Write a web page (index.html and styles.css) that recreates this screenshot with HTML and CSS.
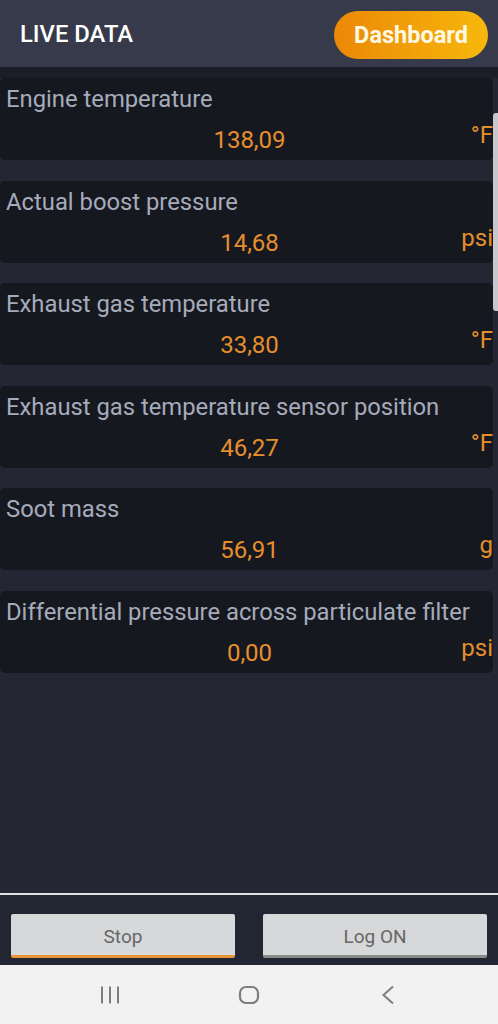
FILE: index.html
```html
<!DOCTYPE html>
<html>
<head>
<meta charset="utf-8">
<link rel="stylesheet" href="styles.css">
</head>
<body>
<div class="app">
  <header class="topbar">
    <h1 class="title">LIVE DATA</h1>
    <button class="dash-btn">Dashboard</button>
  </header>
  <div class="shadow"></div>
  <main class="list">
    <div class="card">
      <div class="label">Engine temperature</div>
      <div class="row"><span class="value">138,09</span><span class="unit">°F</span></div>
    </div>
    <div class="card">
      <div class="label">Actual boost pressure</div>
      <div class="row"><span class="value">14,68</span><span class="unit">psi</span></div>
    </div>
    <div class="card">
      <div class="label">Exhaust gas temperature</div>
      <div class="row"><span class="value">33,80</span><span class="unit">°F</span></div>
    </div>
    <div class="card">
      <div class="label">Exhaust gas temperature sensor position</div>
      <div class="row"><span class="value">46,27</span><span class="unit">°F</span></div>
    </div>
    <div class="card">
      <div class="label">Soot mass</div>
      <div class="row"><span class="value">56,91</span><span class="unit">g</span></div>
    </div>
    <div class="card">
      <div class="label">Differential pressure across particulate filter</div>
      <div class="row"><span class="value">0,00</span><span class="unit">psi</span></div>
    </div>
    <div class="scrollbar"></div>
  </main>
  <footer class="actions">
    <button class="act act-stop">Stop</button>
    <button class="act act-log">Log ON</button>
  </footer>
  <nav class="navbar">
    <svg class="nav-icon" width="20" height="20" viewBox="0 0 20 20"><path d="M2 1.5v17M10 1.5v17M18 1.5v17" stroke="#7e7e7e" stroke-width="2" fill="none"/></svg>
    <svg class="nav-icon" width="22" height="20" viewBox="0 0 22 20"><rect x="2" y="2" width="18" height="16" rx="6" stroke="#7e7e7e" stroke-width="2.2" fill="none"/></svg>
    <svg class="nav-icon" width="20" height="20" viewBox="0 0 20 20"><path d="M15 1.5L5.5 10l9.5 8.5" stroke="#7e7e7e" stroke-width="2" fill="none"/></svg>
  </nav>
</div>
</body>
</html>
```

FILE: styles.css
```css
* { box-sizing: border-box; }
html, body { margin: 0; padding: 0; }
body {
  width: 498px;
  height: 1024px;
  overflow: hidden;
  font-family: Roboto, "Liberation Sans", sans-serif;
  background: #242733;
}
.app {
  display: flex;
  flex-direction: column;
  height: 1024px;
}
.topbar {
  height: 67px;
  background: #363a4b;
  display: flex;
  align-items: center;
  justify-content: space-between;
  padding: 0 10px 0 20px;
}
.title {
  margin: 0;
  color: #ffffff;
  font-size: 23.8px;
  font-weight: 500;
}
.dash-btn {
  border: none;
  height: 48px;
  width: 154px;
  padding: 0;
  border-radius: 24px;
  background: linear-gradient(90deg, #ec8806 0%, #f6b80c 100%);
  color: #fff8e4;
  font-family: Roboto, "Liberation Sans", sans-serif;
  font-size: 23.5px;
  font-weight: 700;
  margin-top: 2px;
}
.shadow {
  height: 11px;
  background: #1c1e27;
}
.list {
  position: relative;
  flex: 1;
  display: flex;
  flex-direction: column;
  gap: 20.5px;
  padding-right: 5px;
}
.card {
  background: #161820;
  border-radius: 5px;
  height: 82px;
  padding: 6px 0 0 6px;
  display: flex;
  flex-direction: column;
}
.label {
  color: #a6abba;
  font-size: 23.8px;
  line-height: 30px;
  white-space: nowrap;
}
.row {
  position: relative;
  display: flex;
  justify-content: center;
  height: 30px;
  line-height: 30px;
  margin-top: 11px;
}
.value {
  color: #e58f2c;
  font-size: 24px;
}
.unit {
  position: absolute;
  right: 0;
  top: -5px;
  color: #e58f2c;
  font-size: 24px;
}
.scrollbar {
  position: absolute;
  right: 0;
  top: 35px;
  width: 5px;
  height: 198px;
  border-radius: 3px 0 0 3px;
  background: #c8c8cc;
}
.actions {
  height: 72px;
  background: #222532;
  border-top: 2px solid #e0e0e0;
  display: flex;
  gap: 28px;
  padding: 19px 11px 0 11px;
}
.act {
  flex: 1;
  height: 44px;
  border: none;
  border-radius: 2px;
  background: #d7d8d9;
  color: #666;
  font-family: Roboto, "Liberation Sans", sans-serif;
  font-size: 19px;
  padding-top: 4px;
}
.act-stop { border-bottom: 3px solid #e8953a; }
.act-log { border-bottom: 3px solid #8a8a8a; }
.navbar {
  height: 59px;
  background: #f2f2f2;
  display: flex;
  justify-content: center;
  align-items: center;
  gap: 118px;
}
.nav-icon { display: block; }
```
